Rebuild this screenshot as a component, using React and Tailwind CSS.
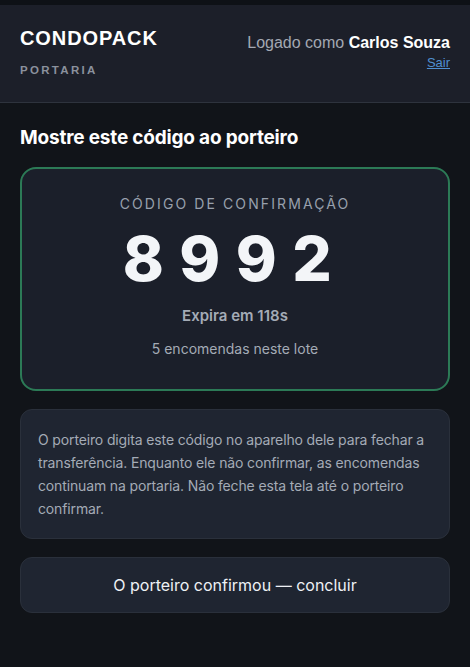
import React from 'react';

export default function App() {
  return (
    <div className="min-h-[667px] bg-[#111419] text-white" style={{ fontFamily: 'Inter, "Noto Sans", sans-serif' }}>
      <div className="h-[5px] bg-[#0e1116]" />
      <header className="flex justify-between items-start bg-[#1c1f29] border-b border-[#2e333d] px-5 pt-[19px] h-[98px]">
        <div className="flex flex-col" style={{ fontFamily: '"Liberation Sans", Arial, sans-serif' }}>
          <span className="text-[20px] font-bold tracking-[0.045em] leading-[28px]">CONDOPACK</span>
          <span className="text-[11.5px] font-bold tracking-[0.2em] text-[#8b919d] mt-[10px]">PORTARIA</span>
        </div>
        <div className="flex flex-col items-end pt-[8px]" style={{ fontFamily: '"Liberation Sans", Arial, sans-serif' }}>
          <span className="text-[16px] text-[#a3a8b2] leading-[22px]">
            Logado como <span className="font-bold text-white">Carlos Souza</span>
          </span>
          <a href="#" className="text-[13px] text-[#4f8fd1] underline leading-[16px] mt-[1px]">Sair</a>
        </div>
      </header>

      <main className="px-5 pt-[22px]">
        <h1 className="text-[19px] font-bold tracking-[-0.01em] leading-[26px]">Mostre este código ao porteiro</h1>

        <div className="mt-[16px] h-[224px] rounded-[16px] border-2 border-[#2c7a56] bg-[#1b1f2a] flex flex-col items-center pt-[25px]">
          <span className="text-[14px] tracking-[0.15em] text-[#98a0ad] leading-[20px]">CÓDIGO DE CONFIRMAÇÃO</span>
          <span className="text-[62px] font-extrabold tracking-[0.25em] leading-[64px] mt-[13px] text-[#f3f5f8]">8992</span>
          <span className="text-[15px] font-semibold text-[#a4abb6] mt-[14px] leading-[22px]">Expira em 118s</span>
          <span className="text-[14px] text-[#a4abb6] mt-[12px] leading-[20px]">5 encomendas neste lote</span>
        </div>

        <div className="mt-[18px] rounded-[12px] border border-[#2a303b] bg-[#1f2531] px-[17px] py-[18px]">
          <p className="text-[14px] tracking-[-0.01em] leading-[23px] text-[#a4abb6]">
            O porteiro digita este código no aparelho dele para fechar a transferência. Enquanto ele não confirmar, as encomendas continuam na portaria. Não feche esta tela até o porteiro confirmar.
          </p>
        </div>

        <button className="mt-[18px] w-full h-[56px] rounded-[12px] border border-[#2a303b] bg-[#1f2531] text-[16px] text-[#eef1f5]">
          O porteiro confirmou — concluir
        </button>
      </main>
    </div>
  );
}
